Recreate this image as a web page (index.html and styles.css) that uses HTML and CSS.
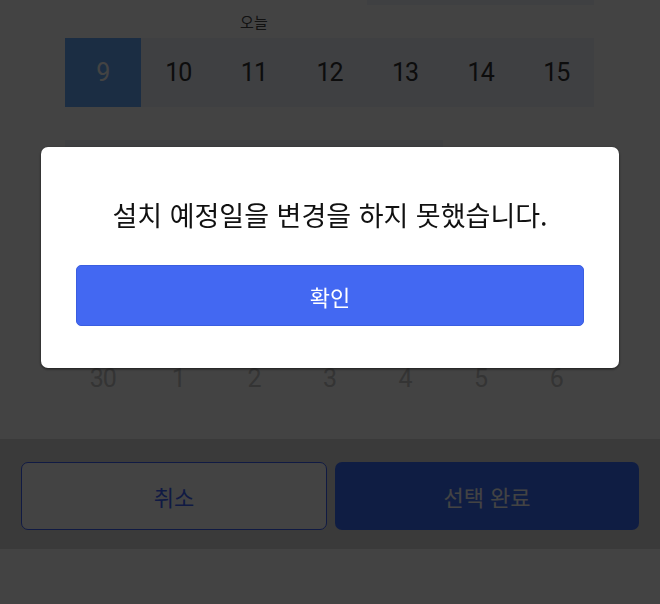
FILE: index.html
```html
<!DOCTYPE html>
<html lang="ko">
<head>
  <meta charset="utf-8" />
  <meta name="viewport" content="width=device-width, user-scalable=no" />
  <title>설치 예정일 선택</title>
  <link rel="stylesheet" href="styles.css">
</head>
<body>
  <div class="sheet">
    <div class="calendar">
      <!-- 이전 주: 스크롤로 아래 끝만 보임 -->
      <div class="week first">
        <div class="days">
          <span></span><span></span><span></span><span></span>
          <span class="range"></span><span class="range"></span><span class="range"></span>
        </div>
      </div>
      <div class="week">
        <div class="labels">
          <span></span><span></span><span>오늘</span><span></span><span></span><span></span><span></span>
        </div>
        <div class="days">
          <span class="selected">9</span>
          <span class="range">10</span><span class="range">11</span><span class="range">12</span>
          <span class="range">13</span><span class="range">14</span><span class="range">15</span>
        </div>
      </div>
      <div class="week">
        <div class="labels"></div>
        <div class="days">
          <span class="range">16</span><span class="range">17</span><span class="range">18</span>
          <span class="range">19</span><span class="range">20</span><span>21</span><span>22</span>
        </div>
      </div>
      <div class="week">
        <div class="labels"></div>
        <div class="days">
          <span>23</span><span>24</span><span>25</span><span>26</span><span>27</span><span>28</span><span>29</span>
        </div>
      </div>
      <div class="week">
        <div class="labels"></div>
        <div class="days">
          <span>30</span>
          <span class="other">1</span><span class="other">2</span><span class="other">3</span>
          <span class="other">4</span><span class="other">5</span><span class="other">6</span>
        </div>
      </div>
    </div>

    <div class="actions">
      <button class="btn-cancel">취소</button>
      <button class="btn-done">선택 완료</button>
    </div>
  </div>

  <!-- 알림 팝업 -->
  <div class="dim">
    <div class="alert">
      <p class="alert-msg">설치 예정일을 변경을 하지 못했습니다.</p>
      <button class="alert-ok">확인</button>
    </div>
  </div>
</body>
</html>
```

FILE: styles.css
```css
html, body {
  margin: 0;
  height: 100%;
  overflow: hidden;
}
body {
  background: #fff;
  font-family: "Noto Sans CJK KR", "Noto Sans", sans-serif;
  color: #222;
}
button {
  font-family: inherit;
  cursor: pointer;
}

/* 달력 */
.calendar {
  margin: -64px 66px 0 65px;
}
.week .labels {
  height: 33px;
  display: grid;
  grid-template-columns: repeat(7, 1fr);
  font-size: 15px;
  line-height: 33px;
  text-align: center;
  color: #444;
}
.week .days {
  height: 69px;
  display: grid;
  grid-template-columns: repeat(7, 1fr);
}
.days span {
  display: flex;
  align-items: center;
  justify-content: center;
  font-family: Roboto, "Noto Sans", sans-serif;
  font-size: 25px;
  letter-spacing: -1px;
  color: #333;
}
.days .range {
  background: #eef1fb;
}
.days .selected {
  background: #68adff;
  color: #fff;
}
.days .other {
  color: #c6c6c6;
}
.days span:first-child {
  color: #c6c6c6;
}
.days .selected:first-child {
  color: #fff;
}

/* 하단 버튼 */
.actions {
  margin-top: 26px;
  height: 110px;
  box-sizing: border-box;
  padding: 23px 21px 0;
  background: #dcdcdc;
  display: flex;
  gap: 8px;
}
.actions button {
  flex: 1;
  height: 68px;
  border-radius: 7px;
  font-size: 22px;
}
.btn-cancel {
  background: #fff;
  border: 1.5px solid #3d63ff;
  color: #3d63ff;
}
.btn-done {
  background: #3b6eff;
  border: none;
  color: #fff;
}

/* 팝업 */
.dim {
  position: fixed;
  inset: 0;
  background: rgba(0, 0, 0, 0.737);
  display: flex;
  justify-content: center;
  align-items: flex-start;
  padding-top: 147px;
}
.alert {
  width: 578px;
  box-sizing: border-box;
  background: #fff;
  border-radius: 7px;
  box-shadow: 0 1px 3px rgba(0, 0, 0, 0.6);
  padding: 50px 35px 42px;
}
.alert-msg {
  margin: 0 0 32px;
  text-align: center;
  font-size: 27px;
  line-height: 36px;
  color: #111;
}
.alert-ok {
  display: block;
  width: 100%;
  height: 61px;
  border: 1px solid #3a5ee0;
  border-radius: 5px;
  background: #4368f2;
  color: #fff;
  font-size: 22px;
}
```
